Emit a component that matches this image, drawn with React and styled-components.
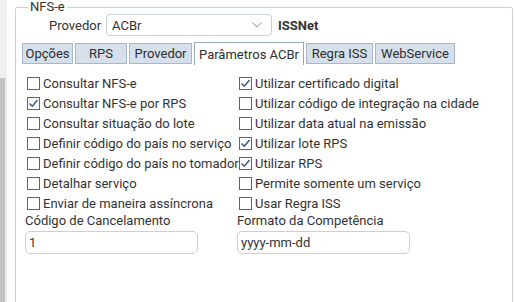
import styled, { createGlobalStyle } from "styled-components";

const GlobalStyle = createGlobalStyle`
  html, body {
    margin: 0;
    padding: 0;
    background: #ffffff;
    overflow: hidden;
  }
  body {
    font-family: Roboto, "Liberation Sans", sans-serif;
    font-size: 13px;
    color: #333333;
  }
`;

const leftItems = [
  { label: "Consultar NFS-e", checked: false },
  { label: "Consultar NFS-e por RPS", checked: true },
  { label: "Consultar situação do lote", checked: false },
  { label: "Definir código do país no serviço", checked: false },
  { label: "Definir código do país no tomador", checked: false },
  { label: "Detalhar serviço", checked: false },
  { label: "Enviar de maneira assíncrona", checked: false },
];

const rightItems = [
  { label: "Utilizar certificado digital", checked: true },
  { label: "Utilizar código de integração na cidade", checked: false },
  { label: "Utilizar data atual na emissão", checked: false },
  { label: "Utilizar lote RPS", checked: true },
  { label: "Utilizar RPS", checked: true },
  { label: "Permite somente um serviço", checked: false },
  { label: "Usar Regra ISS", checked: false },
];

const tabs = [
  { label: "Opções", width: 51 },
  { label: "RPS", width: 52 },
  { label: "Provedor", width: 63 },
  { label: "Parâmetros ACBr", width: 110, active: true },
  { label: "Regra ISS", width: 67 },
  { label: "WebService", width: 80 },
];

const CheckBox = ({ checked, label }) => (
  <CheckRow>
    <Box>
      {checked && (
        <svg width="11" height="11" viewBox="0 0 11 11">
          <polyline
            points="1.5,5.5 4.3,8.3 9.5,2"
            fill="none"
            stroke="#2f5687"
            strokeWidth="1.4"
          />
        </svg>
      )}
    </Box>
    <CheckLabel>{label}</CheckLabel>
  </CheckRow>
);

const App = () => {
  return (
    <>
      <GlobalStyle />
      <Page>
        <SideStrip>
          <StripTop />
          <StripBottom>
            <StripDark />
            <StripLight />
          </StripBottom>
        </SideStrip>

        <Main>
          <Group>
            <Legend>NFS-e</Legend>

            <ProviderRow>
              <FieldLabel>Provedor</FieldLabel>
              <Select>
                <span>ACBr</span>
                <svg width="10" height="6" viewBox="0 0 10 6">
                  <polyline
                    points="0.5,0.5 5,5 9.5,0.5"
                    fill="none"
                    stroke="#8a8f96"
                    strokeWidth="1"
                  />
                </svg>
              </Select>
              <ProviderName>ISSNet</ProviderName>
            </ProviderRow>

            <TabStrip>
              {tabs.map((t) => (
                <Tab key={t.label} $active={t.active} $width={t.width}>
                  {t.label}
                </Tab>
              ))}
            </TabStrip>

            <TabBody>
              <Columns>
                <Column>
                  {leftItems.map((it) => (
                    <CheckBox key={it.label} {...it} />
                  ))}
                  <FieldLabel>Código de Cancelamento</FieldLabel>
                  <TextInput>1</TextInput>
                </Column>
                <Column>
                  {rightItems.map((it) => (
                    <CheckBox key={it.label} {...it} />
                  ))}
                  <FieldLabel>Formato da Competência</FieldLabel>
                  <TextInput>yyyy-mm-dd</TextInput>
                </Column>
              </Columns>
            </TabBody>
          </Group>
        </Main>
      </Page>
    </>
  );
};

export default App;

const Page = styled.div`
  display: flex;
  width: 515px;
  height: 302px;
  overflow: hidden;
`;

const SideStrip = styled.div`
  display: flex;
  flex-direction: column;
  width: 7px;
  flex-shrink: 0;
`;

const StripTop = styled.div`
  height: 78px;
  background: #f0f0f0;
`;

const StripBottom = styled.div`
  display: flex;
  flex: 1;
`;

const StripDark = styled.div`
  width: 5px;
  background: #c3c3c3;
`;

const StripLight = styled.div`
  width: 2px;
  background: #e9e9e9;
`;

const Main = styled.div`
  flex: 1;
  padding-left: 8px;
`;

const Group = styled.fieldset`
  box-sizing: border-box;
  width: 498px;
  height: 330px;
  margin: 0;
  padding: 0;
  border: 1px solid #cfcfcf;
  border-radius: 2px;
`;

const Legend = styled.legend`
  margin-left: 12px;
  padding: 0 2px;
  line-height: 14px;
  font-size: 13px;
  color: #333333;
`;

const ProviderRow = styled.div`
  display: flex;
  align-items: center;
  height: 22px;
  padding-left: 33px;
  margin-top: 0;
`;

const FieldLabel = styled.div`
  line-height: 15px;
  white-space: nowrap;
  color: #333333;
`;

const Select = styled.div`
  box-sizing: border-box;
  display: flex;
  align-items: center;
  justify-content: space-between;
  width: 166px;
  height: 22px;
  margin-left: 5px;
  padding: 0 9px 0 5px;
  border: 1px solid #c9d0d8;
  border-radius: 4px;
  background: #ffffff;
`;

const ProviderName = styled.div`
  margin-left: 6px;
  font-weight: bold;
`;

const TabStrip = styled.div`
  display: flex;
  align-items: flex-start;
  gap: 2px;
  height: 23px;
  margin-top: 6px;
  padding-left: 6px;
`;

const Tab = styled.div`
  box-sizing: border-box;
  display: flex;
  align-items: center;
  justify-content: center;
  width: ${(p) => p.$width}px;
  height: ${(p) => (p.$active ? 23 : 21)}px;
  margin-top: ${(p) => (p.$active ? 0 : 1)}px;
  border: 1px solid ${(p) => (p.$active ? "#98a9bc" : "#a9b8c8")};
  border-bottom: ${(p) => (p.$active ? "none" : "1px solid #a9b8c8")};
  background: ${(p) => (p.$active ? "#ffffff" : "#d5e0ea")};
  white-space: nowrap;
  color: #2e2e2e;
`;

const TabBody = styled.div`
  padding: 8px 0 0 9px;
`;

const Columns = styled.div`
  display: grid;
  grid-template-columns: 212px 240px;
`;

const Column = styled.div`
  display: flex;
  flex-direction: column;
`;

const CheckRow = styled.div`
  display: flex;
  align-items: center;
  height: 20px;
  padding-left: 2px;
`;

const Box = styled.div`
  box-sizing: border-box;
  display: flex;
  align-items: center;
  justify-content: center;
  width: 13px;
  height: 13px;
  border: 1px solid #3f6a99;
  background: #ffffff;
  flex-shrink: 0;
`;

const CheckLabel = styled.span`
  margin-left: 3px;
  white-space: nowrap;
`;

const TextInput = styled.div`
  box-sizing: border-box;
  display: flex;
  align-items: center;
  width: 173px;
  height: 23px;
  margin-top: 3px;
  padding-left: 3px;
  border: 1px solid #c9d0d8;
  border-radius: 5px;
`;
